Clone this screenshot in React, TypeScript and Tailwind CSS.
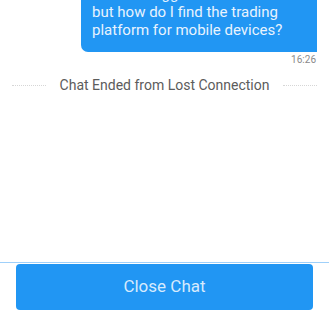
export default function App() {
    return (
        <div className="flex flex-col h-[329px] w-[329px] bg-white overflow-hidden font-['Roboto',sans-serif]">
            <div className="flex-1 flex flex-col overflow-hidden">
                <div className="flex justify-end pr-[12px] -mt-[25px]">
                    <div className="bg-[#2196f3] text-[#e8f3fe] text-[15px] leading-[18px] whitespace-nowrap rounded-l-[7px] rounded-tr-[7px] pl-[11px] pr-[10px] pt-[10px] pb-[13px] w-[236px]">
                        I've now logged in on the site<br />
                        but how do I find the trading<br />
                        platform for mobile devices?
                    </div>
                </div>
                <div className="flex justify-end pr-[13px] mt-[2px] text-[10px] leading-[12px] text-[#8a8a8a]">
                    16:26
                </div>
                <div className="flex items-center mt-[10px] px-[12px]">
                    <div className="flex-1 border-t border-dotted border-[#d6d6d6]"></div>
                    <span className="px-[14px] text-[14px] leading-[18px] text-[#5c5c5c]">Chat Ended from Lost Connection</span>
                    <div className="flex-1 border-t border-dotted border-[#d6d6d6]"></div>
                </div>
            </div>
            <div className="border-t border-[#9fd0fa] px-[16px] pt-[1px] pb-[19px]">
                <button className="w-full h-[46px] rounded-[4px] bg-[#2196f3] text-[#d6eafd] text-[17px]">
                    Close Chat
                </button>
            </div>
        </div>
    );
}
